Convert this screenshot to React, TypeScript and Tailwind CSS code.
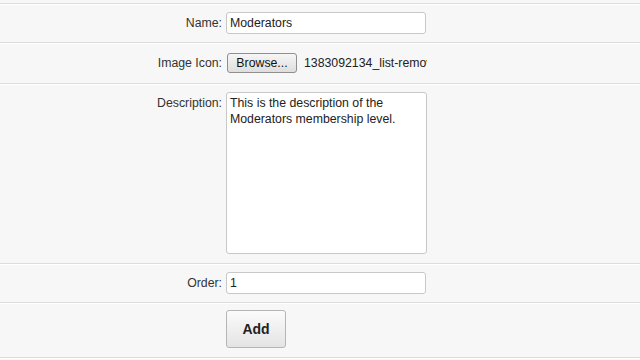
import React from 'react';

const rowCls = 'flex border-b border-[#dcdcdc] shadow-[0_1px_0_#ffffff]';

function Row({ label, top, children, h }: { label: string; top?: boolean; children?: React.ReactNode; h: string }) {
    return (
        <div className={`${rowCls} ${h} ${top ? 'items-start pt-[8px]' : 'items-center'}`}>
            <div className={`w-[226px] shrink-0 text-right pr-[4px] text-[12.3px] text-[#333] ${top ? 'pt-[2px]' : ''}`}>{label}</div>
            <div className="flex items-center">{children}</div>
        </div>
    );
}

export default function App() {
    return (
        <div className="w-[640px] h-[360px] overflow-hidden bg-[#f7f7f7]" style={{ fontFamily: '"Liberation Sans", Arial, sans-serif' }}>
            <div className={`h-[4px] ${rowCls}`} />
            {/* Name */}
            <Row label="Name:" h="h-[39px]">
                <div className="w-[200px] h-[22px] bg-white border border-[#c8c8c8] rounded-[3px] px-[3px] flex items-center text-[12.3px] text-[#222]">
                    Moderators
                </div>
            </Row>
            {/* Image icon */}
            <Row label="Image Icon:" h="h-[41px]">
                <button className="ml-[1px] w-[70px] h-[20px] rounded-[3px] border border-[#8f8f8f] bg-gradient-to-b from-[#f6f6f6] to-[#dedede] text-[12.3px] text-[#111] leading-none">
                    Browse...
                </button>
                <div className="ml-[7px] w-[123px] overflow-hidden whitespace-nowrap text-[12.3px] text-[#222]">1383092134_list-remove.png</div>
            </Row>
            {/* Description */}
            <Row label="Description:" top h="h-[180px]">
                <div className="w-[201px] h-[162px] bg-white border border-[#c8c8c8] rounded-[3px] px-[3px] pt-[2px] text-[12.3px] leading-[16px] text-[#222]">
                    This is the description of the Moderators membership level.
                </div>
            </Row>
            {/* Order */}
            <Row label="Order:" h="h-[39px]">
                <div className="w-[200px] h-[22px] bg-white border border-[#c8c8c8] rounded-[3px] px-[3px] flex items-center text-[12.3px] text-[#222]">
                    1
                </div>
            </Row>
            {/* Submit */}
            <div className={`${rowCls} h-[55px] flex items-start pt-[7px] pl-[226px]`}>
                <button className="w-[60px] h-[38px] rounded-[3px] border border-[#b5b5b5] bg-gradient-to-b from-[#fbfbfb] to-[#e4e4e4] text-[14px] font-bold text-[#222]">
                    Add
                </button>
            </div>
        </div>
    );
}
